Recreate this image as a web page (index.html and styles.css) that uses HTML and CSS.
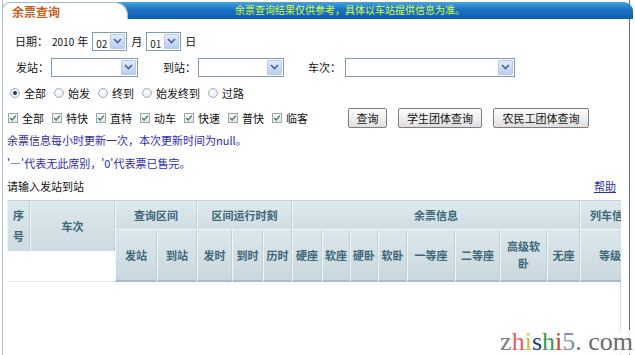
FILE: index.html
```html
<!DOCTYPE html>
<html lang="zh-CN">
<head>
<meta charset="utf-8">
<title>余票查询</title>
<link rel="stylesheet" href="styles.css">
</head>
<body>
<div class="frame">
  <div class="head">
    <div class="tab">余票查询</div>
    <div class="bar">余票查询结果仅供参考，具体以车站提供信息为准。</div>
  </div>

  <div class="row date-row">
    <span>日期：</span>
    <span class="year">2010</span>
    <span class="unit">年</span>
    <span class="sel sel-small"><span class="val">02</span><span class="arr"><svg viewBox="0 0 9 6" width="9" height="6"><path d="M1 1 L4.5 4.5 L8 1" fill="none" stroke="#4d6185" stroke-width="1.6"/></svg></span></span>
    <span class="unit">月</span>
    <span class="sel sel-small"><span class="val">01</span><span class="arr"><svg viewBox="0 0 9 6" width="9" height="6"><path d="M1 1 L4.5 4.5 L8 1" fill="none" stroke="#4d6185" stroke-width="1.6"/></svg></span></span>
    <span class="unit">日</span>
  </div>

  <div class="row station-row">
    <span>发站：</span>
    <span class="sel sel-from"><span class="val"></span><span class="arr"><svg viewBox="0 0 9 6" width="9" height="6"><path d="M1 1 L4.5 4.5 L8 1" fill="none" stroke="#4d6185" stroke-width="1.6"/></svg></span></span>
    <span class="lbl-to">到站：</span>
    <span class="sel sel-to"><span class="val"></span><span class="arr"><svg viewBox="0 0 9 6" width="9" height="6"><path d="M1 1 L4.5 4.5 L8 1" fill="none" stroke="#4d6185" stroke-width="1.6"/></svg></span></span>
    <span class="lbl-train">车次：</span>
    <span class="sel sel-train"><span class="val"></span><span class="arr"><svg viewBox="0 0 9 6" width="9" height="6"><path d="M1 1 L4.5 4.5 L8 1" fill="none" stroke="#4d6185" stroke-width="1.6"/></svg></span></span>
  </div>

  <div class="row radio-row">
    <label class="opt"><span class="radio on"></span>全部</label>
    <label class="opt"><span class="radio"></span>始发</label>
    <label class="opt"><span class="radio"></span>终到</label>
    <label class="opt"><span class="radio"></span>始发终到</label>
    <label class="opt"><span class="radio"></span>过路</label>
  </div>

  <div class="row check-row">
    <label class="opt"><span class="cb"><svg viewBox="0 0 8 8" width="8" height="8"><path d="M1.2 4 L3.2 6 L6.8 1.6" fill="none" stroke="#4f7a55" stroke-width="1.4"/></svg></span>全部</label>
    <label class="opt"><span class="cb"><svg viewBox="0 0 8 8" width="8" height="8"><path d="M1.2 4 L3.2 6 L6.8 1.6" fill="none" stroke="#4f7a55" stroke-width="1.4"/></svg></span>特快</label>
    <label class="opt"><span class="cb"><svg viewBox="0 0 8 8" width="8" height="8"><path d="M1.2 4 L3.2 6 L6.8 1.6" fill="none" stroke="#4f7a55" stroke-width="1.4"/></svg></span>直特</label>
    <label class="opt"><span class="cb"><svg viewBox="0 0 8 8" width="8" height="8"><path d="M1.2 4 L3.2 6 L6.8 1.6" fill="none" stroke="#4f7a55" stroke-width="1.4"/></svg></span>动车</label>
    <label class="opt"><span class="cb"><svg viewBox="0 0 8 8" width="8" height="8"><path d="M1.2 4 L3.2 6 L6.8 1.6" fill="none" stroke="#4f7a55" stroke-width="1.4"/></svg></span>快速</label>
    <label class="opt"><span class="cb"><svg viewBox="0 0 8 8" width="8" height="8"><path d="M1.2 4 L3.2 6 L6.8 1.6" fill="none" stroke="#4f7a55" stroke-width="1.4"/></svg></span>普快</label>
    <label class="opt"><span class="cb"><svg viewBox="0 0 8 8" width="8" height="8"><path d="M1.2 4 L3.2 6 L6.8 1.6" fill="none" stroke="#4f7a55" stroke-width="1.4"/></svg></span>临客</label>
    <div class="btns">
      <button class="btn b-q">查询</button>
      <button class="btn b-s">学生团体查询</button>
      <button class="btn b-n">农民工团体查询</button>
    </div>
  </div>

  <div class="info info1">余票信息每小时更新一次，本次更新时间为null。</div>
  <div class="info info2">'—'代表无此席别，'0'代表票已售完。</div>

  <div class="prompt">
    <span>请输入发站到站</span>
    <a class="help" href="#">帮助</a>
  </div>

  <div class="tablewrap">
    <table class="grid">
      <colgroup>
        <col class="c-no"><col class="c-train"><col class="c-from"><col class="c-to">
        <col class="c-dep"><col class="c-arr"><col class="c-dur">
        <col class="c-s1"><col class="c-s2"><col class="c-s3"><col class="c-s4">
        <col class="c-s5"><col class="c-s6"><col class="c-s7"><col class="c-s8">
        <col class="c-lvl">
      </colgroup>
      <tr class="r1">
        <th rowspan="2" class="lead"><div class="leadbox narrow">序<br>号</div></th>
        <th rowspan="2" class="lead"><div class="leadbox">车次</div></th>
        <th colspan="2">查询区间</th>
        <th colspan="3">区间运行时刻</th>
        <th colspan="8">余票信息</th>
        <th class="last">列车信息</th>
      </tr>
      <tr class="r2">
        <th>发站</th><th>到站</th>
        <th>发时</th><th>到时</th><th>历时</th>
        <th>硬座</th><th>软座</th><th>硬卧</th><th>软卧</th>
        <th>一等座</th><th>二等座</th><th class="wrap">高级软卧</th><th>无座</th>
        <th class="last">等级</th>
      </tr>
    </table>
  </div>
  <div class="rest"></div>
</div>
<div class="mark"><span class="m1">z</span><span class="m2">h</span><span class="m3">i</span><span class="m4">s</span><span class="m5">h</span><span class="m6">i</span><span class="m7">5</span><span class="m8">. com</span></div>
</body>
</html>
```
FILE: styles.css
```css
* { box-sizing: border-box; margin: 0; padding: 0; }

html, body { background: #fff; }

body {
  width: 635px;
  height: 355px;
  overflow: hidden;
  position: relative;
  font-family: "Noto Sans CJK SC", "Liberation Sans", sans-serif;
  font-size: 11px;
  color: #111;
}

.frame {
  margin-left: 2px;
  width: 628px;
  height: 355px;
  border-left: 1px solid #a9c4d3;
  border-right: 1px solid #56738a;
  display: flex;
  flex-direction: column;
}

/* header */
.head {
  display: flex;
  height: 19px;
  padding-top: 2px;
  margin-left: -1px;
  margin-right: -4px;
}
.tab {
  position: relative;
  z-index: 1;
  width: 126px;
  background: #fff;
  border: 1px solid #9fbccb;
  border-bottom: none;
  border-radius: 8px 13px 0 0;
  color: #c8601e;
  font-weight: bold;
  font-size: 12px;
  line-height: 17px;
  padding-left: 9px;
}
.bar {
  flex: 1;
  margin-left: -14px;
  padding-left: 121px;
  background: linear-gradient(#4aa2e2, #1a72c2 45%, #0f5fae);
  border-radius: 0 9px 0 0;
  color: #d8ff3a;
  font-size: 10px;
  line-height: 16px;
  white-space: nowrap;
}

/* rows */
.row {
  display: flex;
  align-items: center;
  height: 20px;
  white-space: nowrap;
}
.date-row { margin-top: 12px; padding-left: 12px; }
.station-row { margin-top: 6px; padding-left: 13px; }
.radio-row { margin-top: 6px; padding-left: 7px; gap: 8px; }
.check-row { margin-top: 5px; padding-left: 5px; gap: 8px; }

.year { margin-left: 4px; font-size: 10px; }
.unit { margin: 0 3px 0 3px; }

/* fake select */
.sel {
  display: inline-flex;
  align-items: center;
  justify-content: space-between;
  height: 19px;
  border: 1px solid #7f9db9;
  background: #fff;
  padding: 0 1px 0 3px;
}
.sel .val {
  font-size: 10px;
  align-self: flex-end;
  line-height: 12px;
  color: #222;
}
.sel .arr {
  width: 15px;
  height: 15px;
  background: linear-gradient(#e2ebfd, #b9cdf5);
  border: 1px solid #b7c9ef;
  border-radius: 1px;
  display: flex;
  align-items: center;
  justify-content: center;
}
.sel-small { width: 35px; margin: 0 1px; }
.sel-from { width: 87px; margin-left: 2px; }
.lbl-to { margin-left: 25px; }
.sel-to { width: 86px; margin-left: 2px; }
.lbl-train { margin-left: 24px; }
.sel-train { width: 170px; margin-left: 4px; }

/* options */
.opt { display: inline-flex; align-items: center; gap: 4px; }
.radio {
  width: 10px;
  height: 10px;
  border-radius: 50%;
  border: 1px solid #a4aeb8;
  background: radial-gradient(circle at 40% 40%, #fff, #dde2e6);
  display: inline-flex;
  align-items: center;
  justify-content: center;
}
.radio.on::after {
  content: "";
  width: 4px;
  height: 4px;
  border-radius: 50%;
  background: #2b3a44;
}
.cb {
  width: 10px;
  height: 10px;
  border: 1px solid #98a6b2;
  background: linear-gradient(#f8f8f8, #e4e7ea);
  display: inline-flex;
  align-items: center;
  justify-content: center;
}

.btns { display: flex; gap: 11px; margin-left: 32px; }
.btn {
  height: 20px;
  border: 1px solid #7e7e7e;
  border-radius: 2px;
  background: linear-gradient(#fdfdfd, #ececec 60%, #dedede);
  font-family: inherit;
  font-size: 11px;
  color: #111;
  text-align: center;
  line-height: 17px;
}
.b-q { width: 39px; }
.b-s { width: 84px; }
.b-n { width: 96px; }

/* info lines */
.info {
  padding-left: 4px;
  height: 18px;
  line-height: 18px;
  color: #2d2db4;
}
.info1 { margin-top: 3px; }
.info2 { margin-top: 5px; }

.prompt {
  margin-top: 5px;
  height: 18px;
  line-height: 18px;
  padding: 0 13px 0 4px;
  display: flex;
  justify-content: space-between;
}
.help { color: #2d2db4; text-decoration: underline; }

/* table */
.tablewrap {
  margin-top: 5px;
  margin-left: 4px;
  width: 614px;
  overflow: hidden;
  flex: none;
}
.grid {
  border-collapse: separate;
  border-spacing: 0;
  table-layout: fixed;
  width: 639px;
  border-top: 1px solid #c4d3da;
}
.c-no { width: 23px; }
.c-train { width: 85px; }
.c-from { width: 42px; }
.c-to { width: 40px; }
.c-dep { width: 35px; }
.c-arr { width: 31px; }
.c-dur { width: 29px; }
.c-s1 { width: 30px; }
.c-s2 { width: 28px; }
.c-s3 { width: 28px; }
.c-s4 { width: 29px; }
.c-s5 { width: 48px; }
.c-s6 { width: 45px; }
.c-s7 { width: 47px; }
.c-s8 { width: 33px; }
.c-lvl { width: 66px; }

.grid th {
  padding: 0;
  font-weight: bold;
  color: #3d6677;
  font-size: 11px;
  text-align: center;
  vertical-align: middle;
  border-left: 1px solid #f2f6f8;
  border-right: 1px solid #bfd0d8;
  white-space: nowrap;
}
.grid th.last { text-align: left; padding-left: 9px; overflow: hidden; }
.r2 th.last { padding-left: 18px; }
.r1 th {
  height: 29px;
  background: linear-gradient(#dfe9ee, #cfdde4);
  border-bottom: 1px solid #eef3f6;
}
.r2 th {
  height: 52px;
  background: linear-gradient(#dce7ec, #c9d8df);
  border-bottom: 2px solid #a9bcc3;
}
.r2 th.wrap {
  white-space: normal;
  padding: 0 6px;
  line-height: 17px;
}
.grid th.lead {
  vertical-align: top;
  background: #fff;
  border: none;
  border-bottom: 1px solid #e6e9ea;
}
.leadbox {
  height: 50px;
  background: linear-gradient(#dde8ed, #cddbe2);
  border-left: 1px solid #f2f6f8;
  border-right: 1px solid #bfd0d8;
  display: flex;
  align-items: center;
  justify-content: center;
}
.leadbox.narrow { line-height: 21px; }

.rest {
  flex: 1;
  width: 618px;
  border-right: 1px solid #d4dcdf;
}

/* watermark overlay */
.mark {
  position: absolute;
  right: 1px;
  bottom: 1px;
  font-family: "Liberation Serif", serif;
  font-size: 26px;
  line-height: 24px;
  letter-spacing: 0;
  background: rgba(255,255,255,0.85);
  padding: 0 1px;
}
.m1 { color: #7d7d7d; }
.m2 { color: #e35d6d; }
.m3 { color: #c9c23e; }
.m4 { color: #1d3a8a; }
.m5 { color: #3c9a52; }
.m6 { color: #d53b3b; }
.m7 { color: #7f90b2; }
.m8 { color: #6b6b6b; }
```
